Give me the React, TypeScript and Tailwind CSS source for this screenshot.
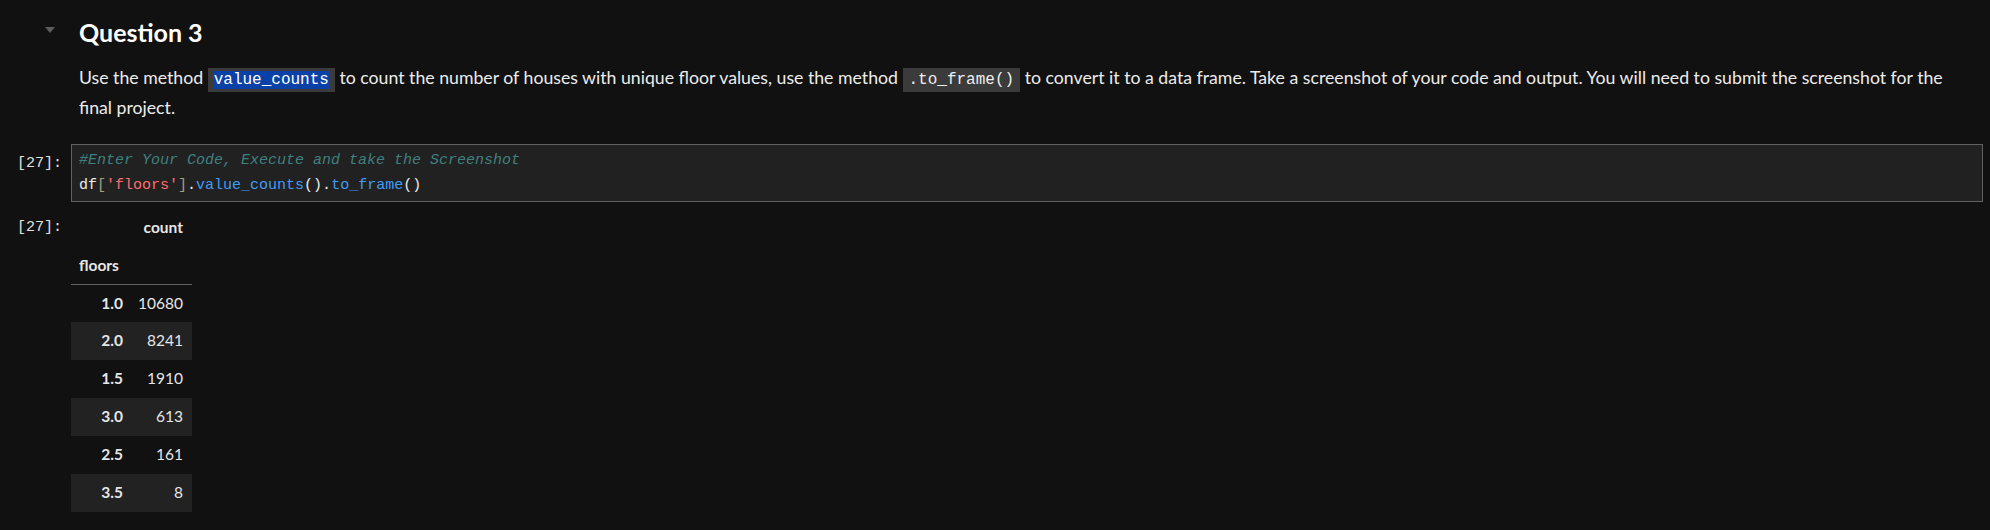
import React from "react";

const rows: [string, string, boolean][] = [
  ["1.0", "10680", false],
  ["2.0", "8241", true],
  ["1.5", "1910", false],
  ["3.0", "613", true],
  ["2.5", "161", false],
  ["3.5", "8", true],
];

export default function App() {
  const sans = { fontFamily: '"Segoe UI", Lato, "Noto Sans", sans-serif' };
  return (
    <div
      className="w-full min-h-[530px] bg-[#111111] text-[#e6e6e6] overflow-hidden"
      style={sans}
    >
      {/* Heading */}
      <div className="relative pt-[14px] pl-[79px]">
        <div className="absolute left-[45px] top-[27px] w-0 h-0 border-l-[5.5px] border-r-[5.5px] border-t-[6px] border-l-transparent border-r-transparent border-t-[#5c5c5c]" />
        <h3 className="text-[25px] leading-[36px] font-bold text-white">Question 3</h3>
      </div>

      {/* Paragraph */}
      <div className="pl-[79px] pt-[14px] pr-[7px]">
        <p className="text-[17.7px] leading-[28px] text-[#ececec] whitespace-nowrap">
          Use the method{" "}
          <code className="bg-[#3b3b3b] px-[6px] py-[3px] text-[16px] font-['Liberation_Mono',monospace]">
            <span className="bg-[#0a41a6] text-white">value_counts</span>
          </code>{" "}
          to count the number of houses with unique floor values, use the method{" "}
          <code className="bg-[#3b3b3b] px-[6px] py-[3px] text-[16px] font-['Liberation_Mono',monospace] text-[#f0f0f0]">
            .to_frame()
          </code>{" "}
          to convert it to a data frame. Take a screenshot of your code and output. You will need to submit the screenshot for the
          <br />
          final project.
        </p>
      </div>

      {/* Code cell */}
      <div className="flex pt-[22px] pr-[7px]">
        <div className="w-[64px] shrink-0 pr-[2px] pt-[7px] text-right font-['Liberation_Mono',monospace] text-[15px] leading-[25px] text-[#e0e0e0]">
          [27]:
        </div>
        <div className="flex-1 ml-[7px] border border-[#616161] bg-[#212121] pl-[7px] py-[3px] font-['Liberation_Mono',monospace] text-[15px] leading-[25px]">
          <div className="italic text-[#3f8080]">#Enter Your Code, Execute and take the Screenshot</div>
          <div className="text-[#ececec]">
            df<span className="text-[#a39e7d]">[</span>
            <span className="text-[#ff6e6e]">'floors'</span>
            <span className="text-[#a39e7d]">]</span>.<span className="text-[#419cf5]">value_counts</span>().
            <span className="text-[#419cf5]">to_frame</span>()
          </div>
        </div>
      </div>

      {/* Output */}
      <div className="flex pt-[7px]">
        <div className="w-[64px] shrink-0 pr-[2px] pt-[6px] text-right font-['Liberation_Mono',monospace] text-[15px] leading-[25px] text-[#e0e0e0]">
          [27]:
        </div>
        <div className="ml-[7px]">
          <table className="border-collapse text-[15.5px] text-[#e6e6e6]">
            <thead>
              <tr className="h-[38px]">
                <th className="w-[60px]"></th>
                <th className="w-[61px] pr-[9px] text-right font-bold">count</th>
              </tr>
              <tr className="h-[37px] border-b border-[#616161]">
                <th className="pl-[8px] text-left font-bold">floors</th>
                <th></th>
              </tr>
            </thead>
            <tbody>
              {rows.map(([k, v, striped]) => (
                <tr key={k} className={striped ? "h-[38px] bg-[#222222]" : "h-[38px]"}>
                  <th className="pr-[8px] text-right font-bold">{k}</th>
                  <td className="pr-[9px] text-right">{v}</td>
                </tr>
              ))}
            </tbody>
          </table>
        </div>
      </div>
    </div>
  );
}
